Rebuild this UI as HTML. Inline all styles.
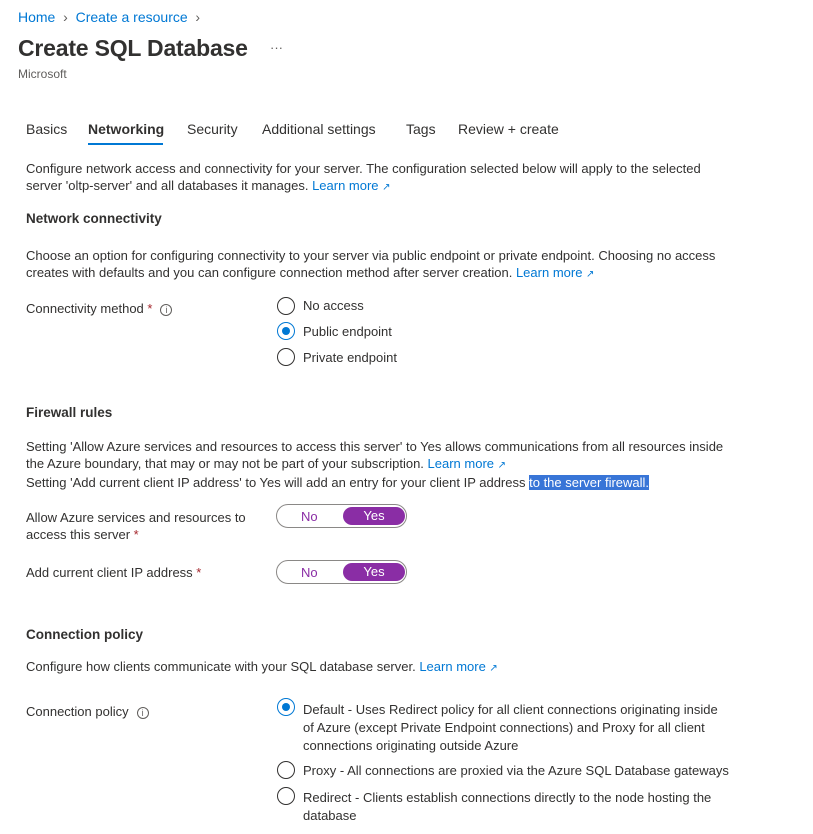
<!DOCTYPE html>
<html><head><meta charset="utf-8"><style>
*{margin:0;padding:0;box-sizing:border-box}
body{width:813px;height:834px;background:#fff;font-family:"Liberation Sans",sans-serif;font-size:13px;color:#323130;position:relative;overflow:hidden}
.a{position:absolute;white-space:nowrap}
.l{color:#0078d4}
h1{position:absolute;left:18px;top:35px;font-size:23px;font-weight:bold;color:#323130;letter-spacing:-0.2px}
.tab{position:absolute;top:121px;font-size:14px;color:#323130}
.h{font-weight:bold;font-size:13.5px}
.r{position:absolute;width:18px;height:18px;border:1.5px solid #323130;border-radius:50%}
.r.on{border-color:#0078d4}
.r.on:after{content:"";position:absolute;left:3.5px;top:3.5px;width:8px;height:8px;border-radius:50%;background:#0078d4}
.i{display:inline-block;width:12px;height:12px;border:1px solid #605e5c;border-radius:50%;font-size:9px;line-height:10px;text-align:center;color:#605e5c;vertical-align:middle;margin-left:8px}
.req{color:#a4262c}
.tg{position:absolute;left:276px;width:131px;height:24px;border:1px solid #8a8886;border-radius:12px}
.tg .n{position:absolute;left:24px;top:4px;color:#8a2da5}
.tg .y{position:absolute;left:66px;top:2px;width:62px;height:18px;border-radius:9px;background:#8a2da5;color:#fff;text-align:center;line-height:18px}
.ext{font-size:10px}
</style></head><body>
<div class="a" style="left:18px;top:9px;font-size:14px"><span class="l">Home</span> <span style="color:#605e5c">&nbsp;›&nbsp;</span> <span class="l">Create a resource</span> <span style="color:#605e5c">&nbsp;›</span></div>
<h1>Create SQL Database</h1>
<div class="a" style="left:270px;top:40px;color:#605e5c">···</div>
<div class="a" style="left:18px;top:67px;font-size:12px;color:#605e5c">Microsoft</div>
<div class="tab" style="left:26px">Basics</div>
<div class="tab" style="left:88px;font-weight:bold">Networking</div>
<div class="a" style="left:88px;top:143px;width:75px;height:2px;background:#0078d4"></div>
<div class="tab" style="left:187px">Security</div>
<div class="tab" style="left:262px">Additional settings</div>
<div class="tab" style="left:406px">Tags</div>
<div class="tab" style="left:458px">Review + create</div>

<div class="a" style="left:26px;top:160px;line-height:17px">Configure network access and connectivity for your server. The configuration selected below will apply to the selected<br>server 'oltp-server' and all databases it manages. <span class="l">Learn more <span class="ext">↗</span></span></div>
<div class="a h" style="left:26px;top:211px">Network connectivity</div>
<div class="a" style="left:26px;top:247px;line-height:17px">Choose an option for configuring connectivity to your server via public endpoint or private endpoint. Choosing no access<br>creates with defaults and you can configure connection method after server creation. <span class="l">Learn more <span class="ext">↗</span></span></div>
<div class="a" style="left:26px;top:301px">Connectivity method <span class="req">*</span><span class="i">i</span></div>
<div class="r" style="left:277px;top:297px"></div><div class="a" style="left:303px;top:298px">No access</div>
<div class="r on" style="left:277px;top:322px"></div><div class="a" style="left:303px;top:324px">Public endpoint</div>
<div class="r" style="left:277px;top:348px"></div><div class="a" style="left:303px;top:350px">Private endpoint</div>

<div class="a h" style="left:26px;top:405px">Firewall rules</div>
<div class="a" style="left:26px;top:438px;line-height:17px">Setting 'Allow Azure services and resources to access this server' to Yes allows communications from all resources inside<br>the Azure boundary, that may or may not be part of your subscription. <span class="l">Learn more <span class="ext">↗</span></span><br>Setting 'Add current client IP address' to Yes will add an entry for your client IP address <span style="background:#3875d7;color:#fff">to the server firewall.</span></div>
<div class="a" style="left:26px;top:509px;line-height:17px">Allow Azure services and resources to<br>access this server <span class="req">*</span></div>
<div class="tg" style="top:504px"><span class="n">No</span><span class="y">Yes</span></div>
<div class="a" style="left:26px;top:565px">Add current client IP address <span class="req">*</span></div>
<div class="tg" style="top:560px"><span class="n">No</span><span class="y">Yes</span></div>

<div class="a h" style="left:26px;top:627px">Connection policy</div>
<div class="a" style="left:26px;top:659px">Configure how clients communicate with your SQL database server. <span class="l">Learn more <span class="ext">↗</span></span></div>
<div class="a" style="left:26px;top:704px">Connection policy<span class="i">i</span></div>
<div class="r on" style="left:277px;top:698px"></div><div class="a" style="left:303px;top:701px;line-height:18px">Default - Uses Redirect policy for all client connections originating inside<br>of Azure (except Private Endpoint connections) and Proxy for all client<br>connections originating outside Azure</div>
<div class="r" style="left:277px;top:761px"></div><div class="a" style="left:303px;top:763px">Proxy - All connections are proxied via the Azure SQL Database gateways</div>
<div class="r" style="left:277px;top:787px"></div><div class="a" style="left:303px;top:789px;line-height:18px">Redirect - Clients establish connections directly to the node hosting the<br>database</div>
</body></html>
